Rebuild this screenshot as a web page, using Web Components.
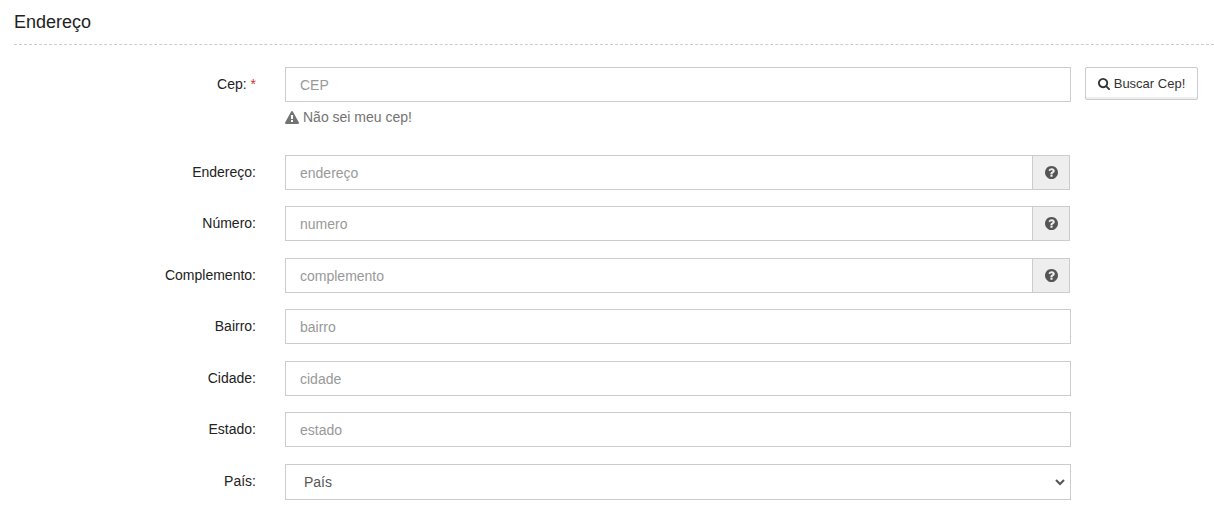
<!DOCTYPE html>
<html lang="pt-BR">
<head>
<meta charset="utf-8">
<meta name="viewport" content="width=device-width, initial-scale=1">
<title>Endereço</title>
<style>
body { margin: 0; background: #fff; color: #222; font: 14px/20px "Liberation Sans", Arial, sans-serif; }
</style>
</head>
<body>
<address-section heading="Endereço">
  <form-field label="Cep:" name="cep" placeholder="CEP" required>
    <search-button slot="action">Buscar Cep!</search-button>
    <hint-link slot="hint" href="#cep">Não sei meu cep!</hint-link>
  </form-field>
  <form-field label="Endereço:" name="endereco" placeholder="endereço" help></form-field>
  <form-field label="Número:" name="numero" placeholder="numero" help></form-field>
  <form-field label="Complemento:" name="complemento" placeholder="complemento" help></form-field>
  <form-field label="Bairro:" name="bairro" placeholder="bairro"></form-field>
  <form-field label="Cidade:" name="cidade" placeholder="cidade"></form-field>
  <form-field label="Estado:" name="estado" placeholder="estado"></form-field>
  <form-field label="País:" name="pais" placeholder="País" type="select"></form-field>
</address-section>

<script>
const icons = {
  search: ['0 128 1664 1664', 'M1152 832q0-185-131.5-316.5t-316.5-131.5-316.5 131.5-131.5 316.5 131.5 316.5 316.5 131.5 316.5-131.5 131.5-316.5zm512 832q0 52-38 90t-90 38q-54 0-90-38l-343-342q-179 124-399 124-143 0-273.5-55.5t-225-150-150-225-55.5-273.5 55.5-273.5 150-225 225-150 273.5-55.5 273.5 55.5 225 150 150 225 55.5 273.5q0 220-124 399l343 343q37 37 37 90z'],
  question: ['128 128 1536 1536', 'M1024 1376v-192q0-14-9-23t-23-9h-192q-14 0-23 9t-9 23v192q0 14 9 23t23 9h192q14 0 23-9t9-23zm256-672q0-88-55.5-163t-138.5-116-170-41q-243 0-371 213-15 24 8 42l132 100q7 6 19 6 16 0 25-12 53-68 86-92 34-24 86-24 48 0 85.5 26t37.5 59q0 38-20 61t-68 45q-63 28-115.5 86.5t-52.5 125.5v36q0 14 9 23t23 9h192q14 0 23-9t9-23q0-19 21.5-49.5t54.5-49.5q32-18 49-28.5t46-35 44.5-48 28-60.5 12.5-81zm384 192q0 209-103 385.5t-279.5 279.5-385.5 103-385.5-103-279.5-279.5-103-385.5 103-385.5 279.5-279.5 385.5-103 385.5 103 279.5 279.5 103 385.5z'],
  warning: ['0 0 1792 1664', 'M1024 1375v-190q0-14-9.5-23.5t-22.5-9.5h-192q-13 0-22.5 9.5t-9.5 23.5v190q0 14 9.5 23.5t22.5 9.5h192q13 0 22.5-9.5t9.5-23.5zm-2-374l18-459q0-12-10-19-13-11-24-11h-220q-11 0-24 11-10 7-10 21l17 457q0 10 10 16.5t24 6.5h185q14 0 23.5-6.5t10.5-16.5zm-14-934l768 1408q35 63-2 126-17 29-46.5 46t-63.5 17h-1536q-34 0-63.5-17t-46.5-46q-37-63-2-126l768-1408q17-31 47-49t65-18 65 18 47 49z']
};

class FaIcon extends HTMLElement {
  connectedCallback() {
    if (this.shadowRoot) return;
    const [box, path] = icons[this.getAttribute('name')];
    this.attachShadow({ mode: 'open' }).innerHTML = `
      <style>
        :host { display: block; flex: none; width: 14px; height: 13px; }
        svg { display: block; width: 100%; height: 100%; fill: currentColor; }
      </style>
      <svg viewBox="${box}" aria-hidden="true"><path d="${path}"/></svg>`;
  }
}

class AddressSection extends HTMLElement {
  connectedCallback() {
    if (this.shadowRoot) return;
    this.attachShadow({ mode: 'open' }).innerHTML = `
      <style>
        :host { display: block; padding: 12px 0 6px 14px; }
        h2 { margin: 0 0 22px; padding-bottom: 12px; border-bottom: 1px dashed #ccc; font-size: 18px; line-height: 20px; font-weight: 400; }
        form { display: flex; flex-direction: column; gap: 16px; padding-right: 16px; }
        ::slotted(:nth-child(odd):not(:first-child)) { margin-bottom: 1px; }
      </style>
      <h2>${this.getAttribute('heading')}</h2>
      <form><slot></slot></form>`;
  }
}

class FormField extends HTMLElement {
  connectedCallback() {
    if (this.shadowRoot) return;
    const name = this.getAttribute('name');
    const text = this.getAttribute('placeholder');
    const control = this.getAttribute('type') === 'select'
      ? `<select id="${name}" name="${name}"><option>${text}</option></select>`
      : `<input id="${name}" name="${name}" type="text" placeholder="${text}">`;
    const help = this.hasAttribute('help')
      ? '<button type="button" aria-label="Ajuda"><fa-icon name="question"></fa-icon></button>' : '';
    const star = this.hasAttribute('required') ? ' <span>*</span>' : '';
    this.attachShadow({ mode: 'open' }).innerHTML = `
      <style>
        :host { display: grid; grid-template-columns: minmax(0, 257fr) minmax(0, 786fr) 113px; column-gap: 14px; align-items: start; }
        label { padding: 7px 15px 0 0; text-align: right; }
        span { color: #c9302c; }
        .group { display: flex; border: 1px solid #ccc; }
        .group:has(button) { margin-right: 1px; }
        input, select { box-sizing: border-box; flex: 1; min-width: 0; margin: 0; border: 0; border-radius: 0; background: #fff; color: #555; font: inherit; }
        input { height: 33px; padding: 6px 14px; }
        select { height: 34px; margin-right: 2px; padding: 6px 14px; }
        input::placeholder { color: #999; opacity: 1; }
        button { box-sizing: border-box; display: flex; align-items: center; justify-content: center; width: 37px; margin: 0; padding: 0; border: 0; border-left: 1px solid #ccc; background: #eee; color: #555; }
        button fa-icon { width: 13px; }
        ::slotted([slot=hint]) { margin: 5px 0 12px; }
      </style>
      <label for="${name}">${this.getAttribute('label')}${star}</label>
      <div>
        <div class="group">${control}${help}</div>
        <slot name="hint"></slot>
      </div>
      <slot name="action"></slot>`;
  }
}

class SearchButton extends HTMLElement {
  connectedCallback() {
    if (this.shadowRoot) return;
    this.attachShadow({ mode: 'open' }).innerHTML = `
      <style>
        :host { display: block; }
        button { box-sizing: border-box; display: flex; align-items: center; justify-content: center; gap: 4px; width: 100%; height: 33px; margin: 0; padding: 0; border: 1px solid #ccc; border-radius: 2px; background: #fff; box-shadow: inset 0 -2px 1px #eee; color: #333; font: inherit; font-size: 13px; white-space: nowrap; }
        fa-icon { width: 12px; height: 12px; }
      </style>
      <button type="button"><fa-icon name="search"></fa-icon><slot></slot></button>`;
  }
}

class HintLink extends HTMLElement {
  connectedCallback() {
    if (this.shadowRoot) return;
    this.attachShadow({ mode: 'open' }).innerHTML = `
      <style>
        :host { display: flex; }
        a { display: flex; align-items: center; gap: 4px; color: #737373; text-decoration: none; }
      </style>
      <a href="${this.getAttribute('href')}"><fa-icon name="warning"></fa-icon><slot></slot></a>`;
  }
}

customElements.define('fa-icon', FaIcon);
customElements.define('address-section', AddressSection);
customElements.define('form-field', FormField);
customElements.define('search-button', SearchButton);
customElements.define('hint-link', HintLink);
</script>
</body>
</html>
